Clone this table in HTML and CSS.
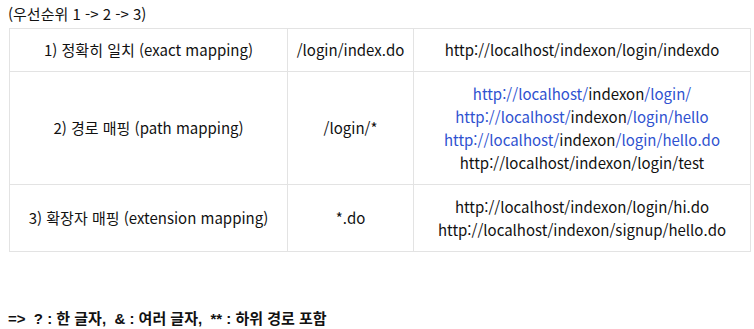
FILE: index.html
```html
<!DOCTYPE html>
<html lang="ko">
<head>
<meta charset="utf-8">
<link rel="stylesheet" href="styles.css">
</head>
<body>
<p class="priority">(우선순위 1 -&gt; 2 -&gt; 3)</p>
<table class="map-table">
  <colgroup>
    <col class="c1"><col class="c2"><col class="c3">
  </colgroup>
  <tr class="r1">
    <td>1) 정확히 일치 (exact mapping)</td>
    <td>/login/index.do</td>
    <td>http://localhost/indexon/login/indexdo</td>
  </tr>
  <tr class="r2">
    <td>2) 경로 매핑 (path mapping)</td>
    <td>/login/*</td>
    <td>
      <span class="link">http://localhost/</span>indexon<span class="link">/login/</span><br>
      <span class="link">http://localhost/</span>indexon<span class="link">/login/hello</span><br>
      <span class="link">http://localhost/</span>indexon<span class="link">/login/hello.do</span><br>
      http://localhost/indexon/login/test
    </td>
  </tr>
  <tr class="r3">
    <td>3) 확장자 매핑 (extension mapping)</td>
    <td>*.do</td>
    <td>http://localhost/indexon/login/hi.do<br>http://localhost/indexon/signup/hello.do</td>
  </tr>
</table>
<p class="note">=&gt;&nbsp; ? : 한 글자,&nbsp; &amp; : 여러 글자,&nbsp; ** : 하위 경로 포함</p>
</body>
</html>
```
FILE: styles.css
```css
html, body {
  margin: 0;
  padding: 0;
  background: #fff;
}
body {
  padding: 3px 8px 0 9px;
  font-family: "Noto Sans CJK KR", "Noto Sans", sans-serif;
  font-size: 15px;
  line-height: 22.5px;
  color: #111;
}
.priority {
  margin: 0 0 2px -1px;
}
.map-table {
  border-collapse: collapse;
  width: 741px;
  table-layout: fixed;
}
.c1 { width: 278px; }
.c2 { width: 126px; }
.c3 { width: 337px; }
.map-table td {
  border: 1px solid #e3e3e3;
  text-align: center;
  vertical-align: middle;
  padding: 10px 4px;
  line-height: 23px;
}
.r1 td { line-height: 22px; }
.link { color: #2f52d0; }
.note {
  margin: 56px 0 0 -1px;
  font-family: "Liberation Sans", "Noto Sans CJK KR", sans-serif;
  font-weight: bold;
  font-size: 15px;
}
```
